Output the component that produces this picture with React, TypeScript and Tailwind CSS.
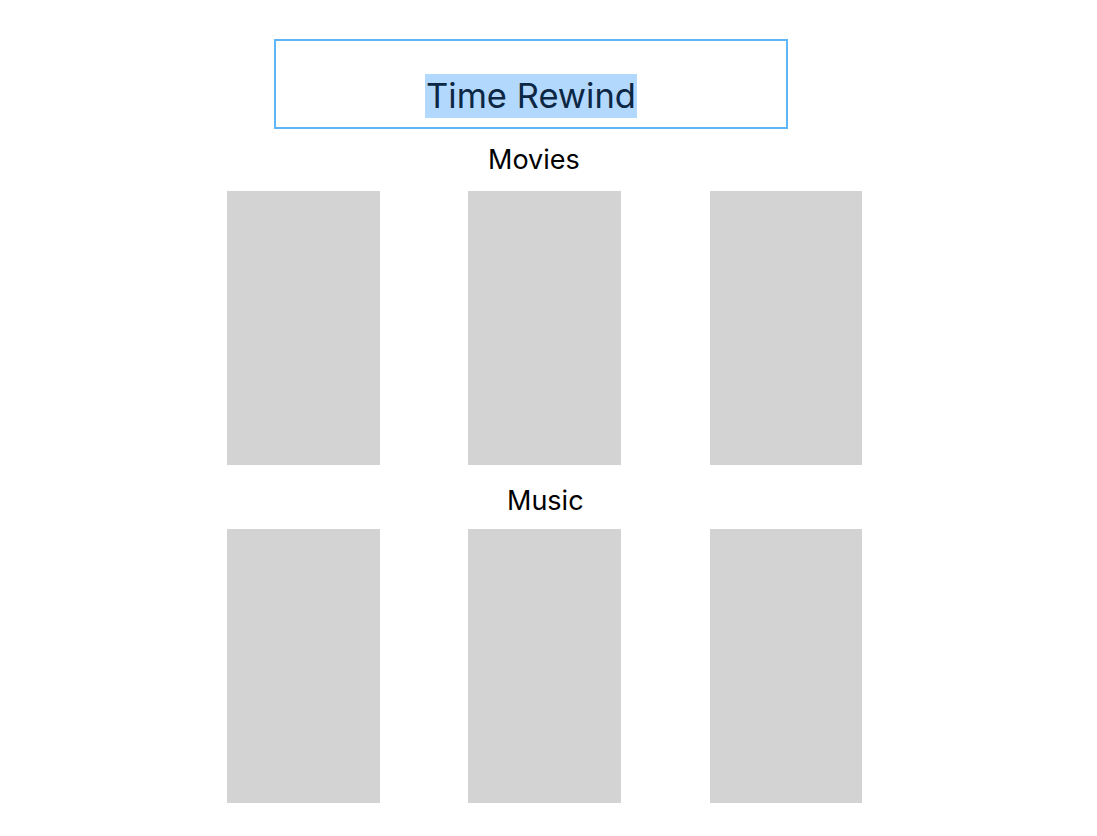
const rows = [
  { title: "Movies", offset: "ml-[488px]", gapTop: "mt-[14px]", gapBottom: "mb-[15px]" },
  { title: "Music", offset: "ml-[507px]", gapTop: "mt-[19px]", gapBottom: "mb-[12px]" },
];

const App = () => {
  return (
    <div className="w-full min-h-screen bg-white pt-[39px] font-['Inter',sans-serif] text-black">
      {/* header box */}
      <div className="ml-[274px] w-[514px] h-[90px] border-2 border-[#5fb6f7] flex items-end justify-center pb-[9px]">
        <span className="bg-[#b3d8fd] text-[#0c2744] text-[34.5px] leading-[44px] px-[1px]">Time Rewind</span>
      </div>

      {rows.map((row) => (
        <section key={row.title}>
          <h2 className={`${row.offset} ${row.gapTop} ${row.gapBottom} text-[27px] leading-[33px]`}>
            {row.title}
          </h2>
          <div className="ml-[227px] flex">
            <div className="w-[153px] h-[274px] bg-[#d3d3d3]" />
            <div className="ml-[88px] w-[153px] h-[274px] bg-[#d3d3d3]" />
            <div className="ml-[89px] w-[152px] h-[274px] bg-[#d3d3d3]" />
          </div>
        </section>
      ))}
    </div>
  );
};

export default App;
